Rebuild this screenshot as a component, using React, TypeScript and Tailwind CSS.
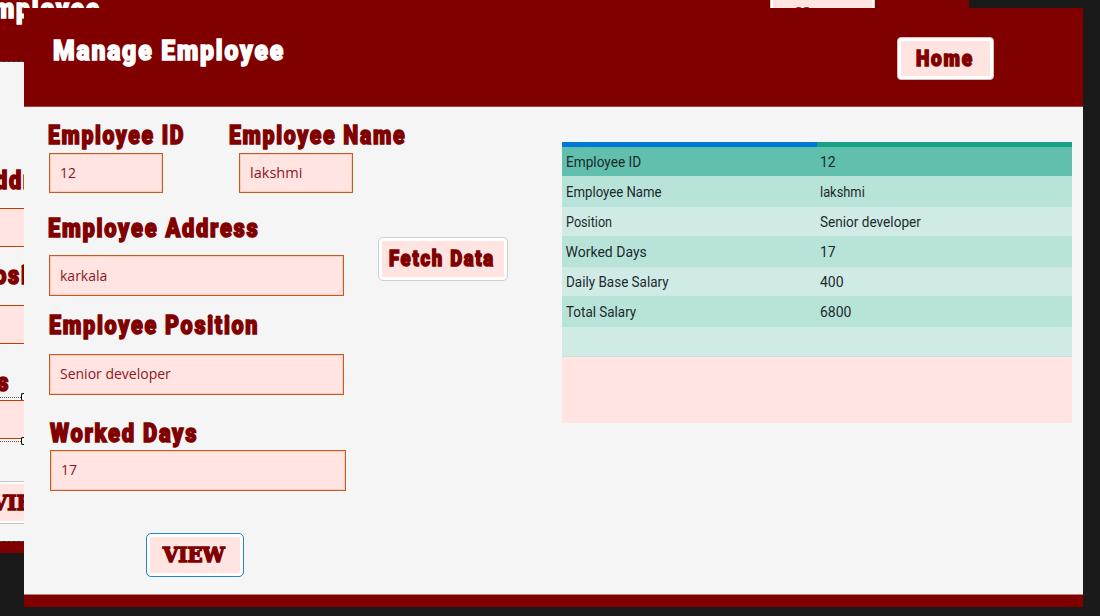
import { useLayoutEffect, useRef, useState } from 'react';
import clsx from 'clsx';

/** Single line of text stretched or condensed horizontally to a given width. */
function FitText({ text, width, className }: { text: string; width: number; className?: string }) {
  const ref = useRef<HTMLSpanElement>(null);
  const [scale, setScale] = useState(1);
  useLayoutEffect(() => {
    if (ref.current) setScale(width / ref.current.offsetWidth);
  }, [width, text]);
  return (
    <span className={clsx('block whitespace-nowrap', className)} style={{ width }}>
      <span ref={ref} className="inline-block origin-left align-top" style={{ transform: `scaleX(${scale})` }}>
        {text}
      </span>
    </span>
  );
}

const display = "font-['Roboto',sans-serif] font-black [-webkit-text-stroke:1.5px_currentColor] tracking-[2px]";

function Label({ text, width, className }: { text: string; width: number; className?: string }) {
  return (
    <FitText
      text={text}
      width={width}
      className={clsx(display, 'h-7 text-[25.5px] leading-[29px] text-[#800000]', className)}
    />
  );
}

function Field({ value, width, className }: { value: string; width: number; className?: string }) {
  return (
    <div
      className={clsx(
        'flex items-center border border-[#c75a20] bg-[#ffe4e1] pl-[10px] text-[#8f1526] shadow-[inset_0_0_0_1px_#f7cdbd]',
        className,
      )}
    >
      <FitText text={value} width={width} className="font-['Open_Sans',sans-serif] text-[14px] leading-5" />
    </div>
  );
}

const rows = [
  { name: 'Employee ID', nw: 75, value: '12', vw: 16, cls: 'h-[29px] bg-[#61bfad]' },
  { name: 'Employee Name', nw: 96, value: 'lakshmi', vw: 45, cls: 'h-[31px] bg-[#b8e3d9]' },
  { name: 'Position', nw: 46, value: 'Senior developer', vw: 101, cls: 'h-[29px] bg-[#d0ebe5]' },
  { name: 'Worked Days', nw: 81, value: '17', vw: 16, cls: 'h-[31px] bg-[#b8e3d9]' },
  { name: 'Daily Base Salary', nw: 103, value: '400', vw: 24, cls: 'h-[29px] bg-[#d0ebe5]' },
  { name: 'Total Salary', nw: 70, value: '6800', vw: 31, cls: 'h-[31px] bg-[#b8e3d9]' },
];

function ResultTable() {
  return (
    <div className="mt-[35px] ml-[538px] h-[281px] w-[510px] bg-[#ffe4e1]">
      <div className="flex h-[5px]">
        <div className="w-[255px] bg-[#0078d7]" />
        <div className="flex-1 bg-[#16a085]" />
      </div>
      {rows.map((r) => (
        <div
          key={r.name}
          className={clsx(
            "flex items-center pl-[3.5px] font-['Roboto',sans-serif] text-[14px] leading-5 text-[#1c2a2c]",
            r.cls,
          )}
        >
          <div className="w-[254.5px]">
            <FitText text={r.name} width={r.nw} />
          </div>
          <FitText text={r.value} width={r.vw} />
        </div>
      ))}
      <div className="h-[30px] border-b border-[#c3e2da] bg-[#d0ebe5]" />
    </div>
  );
}

function Handle() {
  return <div className="h-2 w-[3px] shrink-0 rounded-l-[2px] border-y border-l border-black bg-white" />;
}

function BackWindow() {
  return (
    <div className="absolute top-0 left-0 h-[553px] w-[969px] overflow-hidden bg-[#f5f5f5]">
      <div className="flex h-[62px] border-b border-dashed border-[#444] bg-[#800000]">
        <FitText
          text="Manage Employee"
          width={232}
          className={clsx(display, '-mt-[9px] -ml-[131px] h-9 text-[27.5px] leading-9 text-white')}
        />
        <div className="-mt-9 ml-[669px] flex h-[52px] w-[105px] justify-center rounded border border-[#d0d0d0] bg-[#ffe4e1] shadow-[inset_0_0_0_2px_white]">
          <FitText
            text="Home"
            width={57}
            className={clsx(display, 'mt-[36px] ml-1 h-8 text-[22px] leading-8 text-[#800000]')}
          />
        </div>
      </div>
      <div className="flex h-[479px] w-6 flex-col overflow-hidden">
        <Label text="Employee Address" width={211} className="mt-[104px] -ml-[139px] shrink-0" />
        <div className="mt-[14px] h-[39px] shrink-0 border-y border-[#c04000] bg-[#ffe4e1]" />
        <Label text="Employee Position" width={211} className="mt-[14px] -ml-[138px] shrink-0" />
        <div className="mt-4 h-[39px] shrink-0 border-y border-[#c04000] bg-[#ffe4e1]" />
        <Label text="Worked Days" width={148} className="mt-6 -ml-[138px] shrink-0" />
        <div className="-mt-[3px] flex h-2 shrink-0 items-center">
          <div className="w-[21px] border-t border-dotted border-[#555]" />
          <Handle />
        </div>
        <div className="-mt-px h-[39px] shrink-0 border-y border-[#c04000] bg-[#ffe4e1]" />
        <div className="-mt-[2px] flex h-2 shrink-0 items-center">
          <div className="w-[21px] border-t border-dotted border-[#555]" />
          <Handle />
        </div>
        <div className="mt-9 flex h-[43px] w-[90px] shrink-0 items-center border-y border-[#c8c8c8] bg-[#ffe4e1] shadow-[inset_0_2px_white,inset_0_-2px_white]">
          <FitText
            text="VIEW"
            width={62}
            className="-ml-2 h-8 font-['DejaVu_Serif',serif] text-[21px] leading-8 font-bold text-[#800000] [-webkit-text-stroke:1.6px_currentColor]"
          />
        </div>
      </div>
      <div className="h-3 border-t border-dashed border-[#444] bg-[#800000]" />
    </div>
  );
}

function FrontWindow() {
  return (
    <div className="absolute top-2 left-6 flex h-[599px] w-[1059px] flex-col bg-[#f5f5f5]">
      <header className="flex h-[99px] shrink-0 border-b border-[#a04545] bg-[#800000]">
        <FitText
          text="Manage Employee"
          width={232}
          className={clsx(display, 'mt-[25px] ml-[29px] h-9 text-[27.5px] leading-9 text-white')}
        />
        <button className="mt-[29px] ml-[612px] flex h-[43px] w-[97px] items-center rounded border border-[#d0c0c0] bg-[#ffe4e1] pl-[18px] shadow-[inset_0_0_0_3px_white]">
          <FitText
            text="Home"
            width={58}
            className={clsx(display, 'h-8 text-left text-[22px] leading-8 text-[#800000]')}
          />
        </button>
      </header>
      <main className="flex flex-1">
        <form className="w-0">
          <div className="flex w-[400px] pt-[14px]">
            <div className="w-[181px] pl-6">
              <Label text="Employee ID" width={137} />
              <Field value="12" width={16} className="mt-1 ml-px h-10 w-[114px]" />
            </div>
            <div className="pl-6">
              <Label text="Employee Name" width={177} />
              <Field value="lakshmi" width={52} className="mt-1 ml-[10px] h-10 w-[114px]" />
            </div>
          </div>
          <Label text="Employee Address" width={211} className="mt-[21px] ml-6" />
          <Field value="karkala" width={47} className="mt-[13px] ml-[25px] h-[41px] w-[295px]" />
          <Label text="Employee Position" width={210} className="mt-[15px] ml-[25px]" />
          <Field value="Senior developer" width={111} className="mt-[15px] ml-[25px] h-[41px] w-[295px] pb-px" />
          <Label text="Worked Days" width={148} className="mt-6 ml-[26px]" />
          <Field value="17" width={16} className="mt-[3px] ml-[26px] h-[41px] w-[296px] pb-px" />
          <button
            type="button"
            className="mt-[42px] ml-[122px] flex h-11 w-[98px] items-center rounded-[5px] border border-[#2485d0] bg-[#ffe4e1] pb-px pl-4 shadow-[inset_0_0_0_3px_white]"
          >
            <FitText
              text="VIEW"
              width={62}
              className="h-8 text-left font-['DejaVu_Serif',serif] text-[21px] leading-8 font-bold text-[#800000] [-webkit-text-stroke:1.6px_currentColor]"
            />
          </button>
        </form>
        <div className="w-0">
          <button className="mt-[130px] ml-[354px] flex h-11 w-[130px] items-center rounded-[5px] border border-[#cfcfcf] bg-[#ffe4e1] pl-[10px] shadow-[inset_0_0_0_3px_white]">
            <FitText
              text="Fetch Data"
              width={106}
              className={clsx(display, 'h-8 text-left text-[22px] leading-8 text-[#800000]')}
            />
          </button>
        </div>
        <ResultTable />
      </main>
      <footer className="h-[13px] shrink-0 border-t border-[#c08080] bg-[#800000]" />
    </div>
  );
}

export default function App() {
  return (
    <div className="relative h-[616px] w-[1100px] overflow-hidden bg-[#1a1a1a]">
      <BackWindow />
      <FrontWindow />
    </div>
  );
}
